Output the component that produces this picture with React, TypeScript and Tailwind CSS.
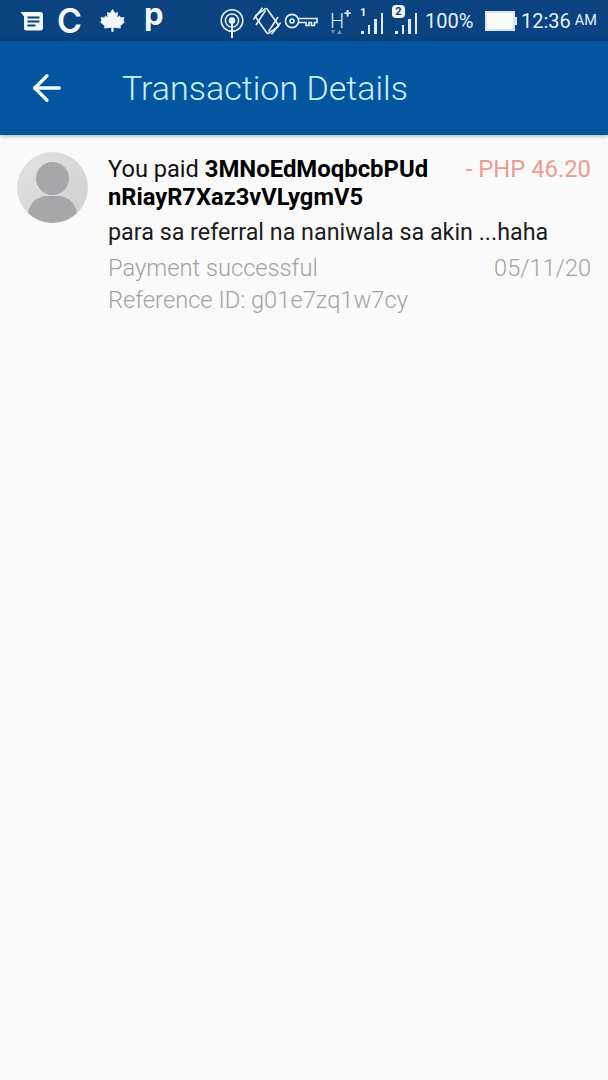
import React from 'react';
import { ArrowLeft } from 'lucide-react';

function MessageIcon() {
  return (
    <svg width="25" height="22" viewBox="0 0 24 22" className="ml-[19px]">
      <path d="M1 2 H21 Q23.5 2 23.5 4.5 V18 Q23.5 20.5 21 20.5 H7 Q4.5 20.5 4.5 18 V6.5 Z" fill="#f4f8fb" />
      <path d="M8 7.5 H20 M8 11.5 H20 M8 15.5 H16" stroke="#0a4482" strokeWidth="2" />
    </svg>
  );
}

function MapleIcon() {
  return (
    <svg width="25" height="25" viewBox="0 0 25 24" className="ml-[15px]">
      <path
        d="M12.5 1 L15 5 L17.5 4 L17 9.5 L19.5 7.5 L20.5 9.5 L24 9 L23 12.5 L24.5 13.5 L20 17.5 L20.5 19.5 L13.2 18.8 L13.2 23 L11.8 23 L11.8 18.8 L4.5 19.5 L5 17.5 L0.5 13.5 L2 12.5 L1 9 L4.5 9.5 L5.5 7.5 L8 9.5 L7.5 4 L10 5 Z"
        fill="#f2f6fa"
        stroke="#f2f6fa"
        strokeWidth="0.8"
        strokeLinejoin="round"
      />
    </svg>
  );
}

function PodcastIcon() {
  return (
    <svg width="24" height="30" viewBox="0 0 24 30" fill="none" stroke="#e6f1f9" strokeWidth="1.5" className="ml-[54px] mt-[6px]">
      <circle cx="12" cy="11.5" r="10.8" />
      <circle cx="12" cy="11.5" r="6.6" />
      <circle cx="12" cy="11.5" r="2.6" fill="#e6f1f9" />
      <path d="M12 13 V29" strokeWidth="2" />
    </svg>
  );
}

function RotateIcon() {
  return (
    <svg width="28" height="28" viewBox="0 0 28 28" fill="none" stroke="#e6f1f9" strokeWidth="1.6" className="ml-[9px]">
      <rect x="7" y="3" width="14" height="22" rx="1.5" transform="rotate(-35 14 14)" />
      <path d="M0.8 12.5 L10 0.8 M3.5 18 L13 3.5" transform="translate(-0.5,0)" />
      <path d="M27.2 15.5 L18 27.2 M24.5 10 L15 24.5" transform="translate(0.5,0)" />
    </svg>
  );
}

function KeyIcon() {
  return (
    <svg width="34" height="16" viewBox="0 0 34 16" fill="none" stroke="#e6f1f9" strokeWidth="1.6" className="ml-[3px]">
      <circle cx="8" cy="8" r="6.6" />
      <circle cx="8" cy="8" r="2" />
      <path d="M14.5 5.5 H33 V9.5 H30.5 V12.5 H27.5 V9.5 H25 V12.5 H22 V9.5 H14.5" />
    </svg>
  );
}

function SignalIcon({ badge }: { badge: string }) {
  const bars = ['h-[3px]', 'h-[9px]', 'h-[15px]', 'h-[21px]'];
  return (
    <div className="relative w-[25px] h-[24px] flex items-end gap-[4px] pl-[1px]">
      {bars.map((h) => (
        <div key={h} className={`w-[2.5px] ${h} bg-[#dfecf6]`} />
      ))}
      {badge === '2' ? (
        <span className="absolute left-[-2px] top-[-5px] w-[13px] h-[13px] rounded-[4px] bg-[#f5f8fb] text-[#0a3f7c] text-[11px] leading-[13px] font-bold text-center">
          2
        </span>
      ) : (
        <span className="absolute left-[0px] top-[-4px] text-[#eef5fa] text-[11px] leading-[13px] font-bold">1</span>
      )}
    </div>
  );
}

function Battery() {
  return (
    <div className="ml-[12px] flex items-center">
      <div className="w-[30px] h-[20px] border-2 border-[#d8e6f1] bg-[#fbfcf8]" />
      <div className="w-[2px] h-[8px] bg-[#dfe9f2]" />
    </div>
  );
}

function StatusBar() {
  return (
    <div className="h-[41px] bg-[#0a437f] flex items-center text-white shrink-0">
      <MessageIcon />
      <span className="ml-[13px] w-[28px] text-[33.8px] leading-[41px] font-semibold font-['Inter',sans-serif] text-[#f6fafc]">C</span>
      <MapleIcon />
      <span className="ml-[19px] w-[22px] self-start h-[34px] text-[31px] leading-[28px] font-bold font-['Inter',sans-serif] text-[#f4f8fb]">p</span>
      <PodcastIcon />
      <RotateIcon />
      <KeyIcon />
      <div className="relative ml-[12px] w-[19px] h-[30px] text-[#dfecf6]">
        <span className="absolute left-0 top-[4px] text-[20px] leading-[22px] font-light">H</span>
        <span className="absolute left-[14px] top-[1px] text-[13px] leading-[13px] font-bold">+</span>
        <svg width="13" height="5" viewBox="0 0 13 5" className="absolute left-[1px] top-[24px]">
          <path d="M0 0 H4 L2 4 Z" fill="#5f8fbd" />
          <path d="M6 4 H11 L8.5 0 Z" fill="#6f9cc6" />
        </svg>
      </div>
      <div className="ml-[11px] mt-[2px]">
        <SignalIcon badge="1" />
      </div>
      <div className="ml-[9px] mt-[2px]">
        <SignalIcon badge="2" />
      </div>
      <span className="ml-[6px] w-[48px] text-[20px] leading-[24px] text-[#e4f0f8] whitespace-nowrap">100%</span>
      <Battery />
      <span className="ml-[4px] text-[20px] leading-[24px] text-[#e4f0f8] whitespace-nowrap">12:36</span>
      <span className="ml-[4px] text-[14.5px] leading-[24px] text-[#e4f0f8] mt-[1px]">AM</span>
    </div>
  );
}

function Avatar() {
  return (
    <div className="relative w-[71px] h-[71px] rounded-full overflow-hidden bg-gradient-to-br from-[#e2e2e3] to-[#cfcfd1] shrink-0">
      <div className="absolute left-[19px] top-[10px] w-[33px] h-[33px] rounded-full bg-[#a7a7a9]" />
      <div className="absolute left-[11px] top-[44px] w-[49px] h-[38px] rounded-full bg-[#a7a7a9]" />
    </div>
  );
}

export default function App() {
  return (
    <div className="w-[608px] h-[1080px] bg-[#fafafa] flex flex-col font-['Roboto',sans-serif] overflow-hidden">
      <StatusBar />
      <div className="h-[94px] bg-[#03559f] flex items-center shadow-[0_1px_4px_rgba(0,0,0,0.3)] shrink-0">
        <ArrowLeft className="ml-[26px] text-[#f2fbfd]" size={42} strokeWidth={1.9} />
        <h1 className="ml-[54px] text-[34px] leading-[40px] font-light text-[#c9f0fb] whitespace-nowrap">
          Transaction Details
        </h1>
      </div>
      <div className="flex pt-[17px] pl-[17px] pr-[17px]">
        <Avatar />
        <div className="ml-[20px] mt-[3px] flex-1">
          <div className="flex justify-between">
            <p className="text-[23.6px] leading-[28px] text-[#111] whitespace-nowrap">
              You paid <span className="text-[23.9px] font-bold text-black">3MNoEdMoqbcbPUd</span>
              <br />
              <span className="text-[23.7px] font-bold text-black">nRiayR7Xaz3vVLygmV5</span>
            </p>
            <span className="text-[23.8px] leading-[28px] text-[#ef9a90] whitespace-nowrap">- PHP 46.20</span>
          </div>
          <p className="mt-[7px] text-[23.3px] leading-[28px] text-[#1c1c1c] whitespace-nowrap">para sa referral na naniwala sa akin ...haha</p>
          <div className="mt-[8px] flex justify-between text-[23.7px] leading-[28px] text-[#a2a2a2] font-light">
            <span>Payment successful</span>
            <span className="text-[23.5px]">05/11/20</span>
          </div>
          <p className="mt-[4px] text-[23.7px] leading-[28px] text-[#a2a2a2] font-light">Reference ID: g01e7zq1w7cy</p>
        </div>
      </div>
    </div>
  );
}
